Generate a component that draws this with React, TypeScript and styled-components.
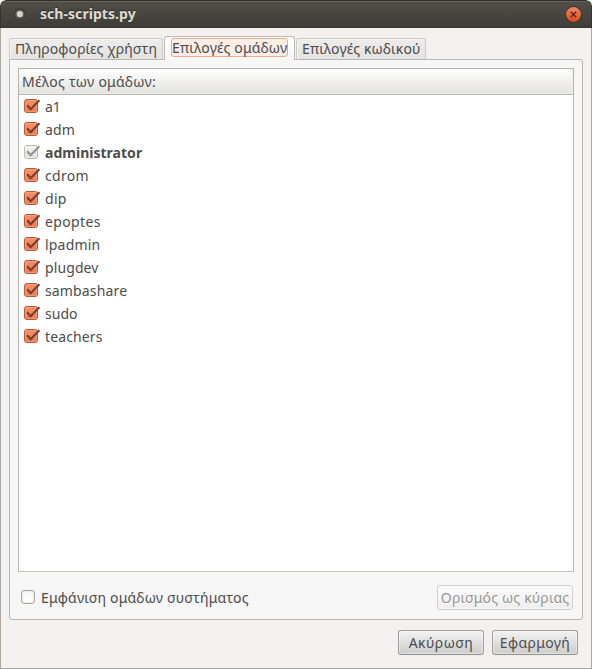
import React from 'react';
import styled, { createGlobalStyle, css } from 'styled-components';

const GlobalStyle = createGlobalStyle`
  * { box-sizing: border-box; }
  body { margin: 0; background: #fff; }
`;

const Window = styled.div`
  width: 592px;
  height: 669px;
  display: flex;
  flex-direction: column;
  overflow: hidden;
  border-radius: 6px 6px 0 0;
  background: #f2f1f0;
  color: #4c4c4c;
  font: 14px/20px 'Noto Sans', 'Open Sans', sans-serif;
  cursor: default;
`;

const TitleBar = styled.header`
  flex: none;
  height: 28px;
  padding: 0 9px 0 12px;
  display: flex;
  align-items: center;
  color: #dfdbd2;
  font-weight: bold;
  background: linear-gradient(#504f49, #3e3d38);
  border: 1px solid #33322e;
  border-top-color: #302f2b;
  border-bottom-color: #383733;
  border-radius: 6px 6px 0 0;
  box-shadow: inset 0 1px #64625a;
  text-shadow: 0 -1px #2c2b28;
`;

const Title = styled.div`
  flex: 1;
  margin-left: 14px;
`;

const Body = styled.main`
  flex: 1;
  display: flex;
  flex-direction: column;
  padding: 8px 8px 13px;
  border: 1px solid #aca7a1;
  border-top: 0;
`;

const Text = styled.span<{ $spacing?: number }>`
  white-space: nowrap;
  letter-spacing: ${(p) => p.$spacing ?? 0}px;
`;

const TabList = styled.div`
  display: flex;
  align-items: flex-end;
  height: 24px;
  margin-bottom: -1px;
  z-index: 1;
`;

const Tab = styled.div<{ $width: number; $active?: boolean }>`
  width: ${(p) => p.$width}px;
  height: 21px;
  margin: 0 1px 1px 0;
  padding: 0 0 0 5px;
  border: 1px solid #cfccc8;
  border-bottom: 0;
  border-radius: 3px 3px 0 0;
  background: linear-gradient(#edecea, #e3e2e0);
  box-shadow: inset 1px 1px #f4f3f2;
  ${(p) =>
    p.$active &&
    css`
      height: 24px;
      margin: 0 1px 0 0;
      padding: 1px 0 0 6px;
      border-color: #bdb9b4;
      background: linear-gradient(#ffffff, #f6f6f6);
      box-shadow: none;
    `}
`;

const FocusRing = styled.div`
  width: 117px;
  height: 19px;
  line-height: 17px;
  border: 1px solid #f1a88e;
  border-radius: 3px;
  background: #faeee9;
`;

const Panel = styled.section`
  height: 561px;
  padding: 8px;
  border: 1px solid #bab6b1;
  border-radius: 0 3px 3px 3px;
  background: #f6f6f6;
`;

const List = styled.div`
  height: 504px;
  border: 1px solid #b8b4ae;
  border-bottom-color: #c9c6c2;
  background: #fff;
`;

const ListHeader = styled.div`
  height: 26px;
  padding: 3px 0 0 3px;
  border-bottom: 1px solid #b9b5af;
  background: linear-gradient(#ffffff, #e2e1df);
  box-shadow: inset -1px -1px #ecebe9;
`;

const Row = styled.div<{ $bold?: boolean }>`
  height: 23px;
  padding-left: 4px;
  display: flex;
  align-items: center;
  gap: 4px;
  font-weight: ${(p) => (p.$bold ? 'bold' : 'normal')};

  svg {
    margin-bottom: 2px;
  }
`;

const PanelFooter = styled.div`
  height: 25px;
  margin-top: 13px;
  display: flex;
  align-items: center;
  justify-content: space-between;
  padding: 0 1px 0 3px;
`;

const CheckLabel = styled.label`
  display: flex;
  align-items: center;
  gap: 6px;
`;

const EmptyBox = styled.span`
  width: 14px;
  height: 14px;
  margin-top: -2px;
  border: 1px solid #aaa59f;
  border-radius: 3px;
  background: linear-gradient(#f5f5f5, #ffffff);
  box-shadow: inset 0 0 0 1px #eeedec;
`;

const Button = styled.button<{ $width: number }>`
  width: ${(p) => p.$width}px;
  height: 25px;
  padding: 0;
  color: #4c4c4c;
  font: inherit;
  line-height: 23px;
  border: 1px solid #a29f9b;
  border-bottom-color: #92908c;
  border-radius: 3px;
  background: linear-gradient(#f2f2f2, #cdcdcd);
  box-shadow: inset 0 0 0 1px rgba(255, 255, 255, 0.4);

  &:disabled {
    color: #989590;
    border-color: #d0cecb;
    background: linear-gradient(#fafafa, #eeeeee);
    text-shadow: 0 1px #fff;
  }
`;

const Actions = styled.footer`
  display: flex;
  justify-content: flex-end;
  gap: 8px;
  padding: 10px 5px 0 0;
`;

function Check({ muted }: { muted?: boolean }) {
  const id = muted ? 'check-muted' : 'check-on';
  return (
    <svg width="18" height="17" viewBox="0 0 18 17">
      <defs>
        <linearGradient id={id} x2="0" y2="1">
          <stop stopColor={muted ? '#f3f3f3' : '#fa916b'} />
          <stop offset="1" stopColor={muted ? '#dedede' : '#ee764d'} />
        </linearGradient>
      </defs>
      <rect x="1.5" y="2.5" width="13" height="13" rx="2.2" fill={`url(#${id})`} stroke={muted ? '#b7b5b2' : '#b15b3c'} />
      <rect x="2.5" y="3.5" width="11" height="11" rx="1.2" fill="none" stroke={muted ? '#f4f4f4' : '#fba486'} opacity=".7" />
      <path d="M4.2 8.2 7.6 12.2 16.4 3.2" fill="none" stroke={muted ? '#94928f' : '#73402f'} strokeWidth="2.1" />
    </svg>
  );
}

function WindowIcon() {
  return (
    <svg width="13" height="14" viewBox="0 0 13 14">
      <circle cx="6.8" cy="7" r="5.8" fill="#33322d" />
      <circle cx="6.8" cy="7.2" r="4.9" fill="#5d5b56" />
      <circle cx="6.8" cy="7" r="3.1" fill="#d6d4d0" />
    </svg>
  );
}

function CloseIcon() {
  return (
    <svg width="17" height="17" viewBox="0 0 17 17">
      <defs>
        <linearGradient id="close" x2="0" y2="1">
          <stop stopColor="#f58763" />
          <stop offset="1" stopColor="#de4817" />
        </linearGradient>
      </defs>
      <circle cx="8.5" cy="8.5" r="8.2" fill="#302f2b" />
      <circle cx="8.5" cy="8.5" r="7.5" fill="url(#close)" />
      <path d="m5.8 5.8 5.4 5.4m0-5.4-5.4 5.4" stroke="#4d2b20" strokeWidth="1.4" />
    </svg>
  );
}

const groups: { name: string; spacing: number; primary?: boolean }[] = [
  { name: 'a1', spacing: 0 },
  { name: 'adm', spacing: 0.1 },
  { name: 'administrator', spacing: 0.02, primary: true },
  { name: 'cdrom', spacing: 0.3 },
  { name: 'dip', spacing: 0.3 },
  { name: 'epoptes', spacing: 0.35 },
  { name: 'lpadmin', spacing: 0.2 },
  { name: 'plugdev', spacing: 0.1 },
  { name: 'sambashare', spacing: 0.15 },
  { name: 'sudo', spacing: 0.05 },
  { name: 'teachers', spacing: 0.12 },
];

export default function App() {
  return (
    <>
      <GlobalStyle />
      <Window>
        <TitleBar>
          <WindowIcon />
          <Title><Text $spacing={0.05}>sch-scripts.py</Text></Title>
          <CloseIcon />
        </TitleBar>
        <Body>
          <TabList>
            <Tab $width={154}><Text $spacing={0.09}>Πληροφορίες χρήστη</Text></Tab>
            <Tab $width={131} $active>
              <FocusRing><Text $spacing={0.15}>Επιλογές ομάδων</Text></FocusRing>
            </Tab>
            <Tab $width={130}><Text $spacing={0.1}>Επιλογές κωδικού</Text></Tab>
          </TabList>
          <Panel>
            <List>
              <ListHeader><Text $spacing={0.27}>Μέλος των ομάδων:</Text></ListHeader>
              {groups.map((g) => (
                <Row key={g.name} $bold={g.primary}>
                  <Check muted={g.primary} />
                  <Text $spacing={g.spacing}>{g.name}</Text>
                </Row>
              ))}
            </List>
            <PanelFooter>
              <CheckLabel>
                <EmptyBox />
                <Text $spacing={0.17}>Εμφάνιση ομάδων συστήματος</Text>
              </CheckLabel>
              <Button $width={136} disabled><Text $spacing={0.17}>Ορισμός ως κύριας</Text></Button>
            </PanelFooter>
          </Panel>
          <Actions>
            <Button $width={86}><Text $spacing={0.45}>Ακύρωση</Text></Button>
            <Button $width={86}><Text $spacing={0.35}>Εφαρμογή</Text></Button>
          </Actions>
        </Body>
      </Window>
    </>
  );
}
